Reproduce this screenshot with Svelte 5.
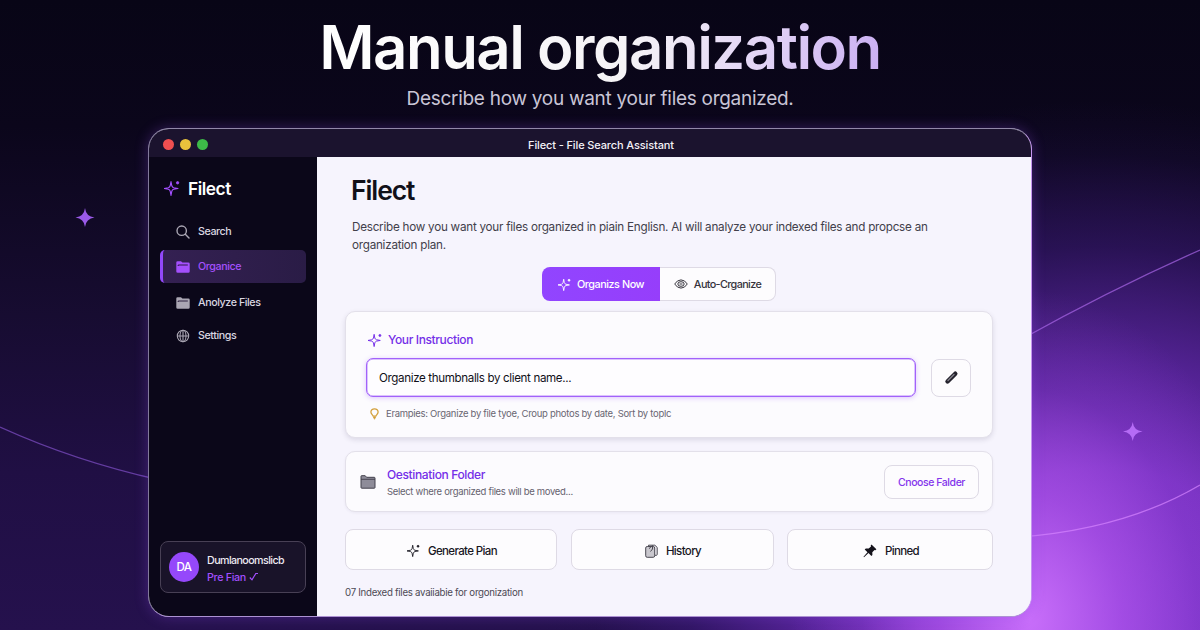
<script>
	const nav = [
		{ label: 'Search', icon: 'search' },
		{ label: 'Organice', icon: 'folder', active: true },
		{ label: 'Anolyze Files', icon: 'folder' },
		{ label: 'Settings', icon: 'globe' }
	];
</script>

{#snippet sparkle(size)}
	<svg width={size} height={size} viewBox="0 0 16 16" fill="none" stroke="currentColor" stroke-width="1.4" stroke-linejoin="round">
		<path d="M7 1.5 7.800 5.800Q8.300 7.200 9.700 7.700L14 8.500 9.700 9.300Q8.300 9.800 7.800 11.200L7 15.500 6.200 11.200Q5.700 9.800 4.300 9.300L0 8.500 4.300 7.700Q5.700 7.200 6.200 5.800Z" stroke-width="1.1" />
		<circle cx="13.6" cy="2.8" r="1.2" fill="currentColor" stroke-width=".8" />
	</svg>
{/snippet}

<div class="page">
	<svg class="backdrop" width="1200" height="630" viewBox="0 0 1200 630" fill="none">
		<path d="M0 427Q75 461 160 480" stroke="#7b4cc0" stroke-opacity=".75" stroke-width="1.3" />
		<path d="M1020 340Q1110 290 1200 250" stroke="#a966e8" stroke-opacity=".7" stroke-width="1.3" />
		<path d="M1020 537Q1125 529 1200 485" stroke="#d585ff" stroke-opacity=".7" stroke-width="1.3" />
		<path d="M85 208Q86 216.500 94.500 217.500 86 218.500 85 227 84 218.500 75.500 217.500 84 216.500 85 208Z" fill="#9a5ae8" />
		<path d="M1132.700 422Q1133.700 430.500 1142.500 431.500 1133.700 432.500 1132.700 441 1131.700 432.500 1123 431.500 1131.700 430.500 1132.700 422Z" fill="#b56bf5" />
	</svg>

	<header>
		<h1>Manual organization</h1>
		<p>Describe how you want your files organized.</p>
	</header>

	<div class="window">
		<div class="titlebar">
			<div class="lights"><i class="red"></i><i class="yellow"></i><i class="green"></i></div>
			<span>Filect - File Search Assistant</span>
		</div>

		<div class="body">
			<aside>
				<div class="brand">{@render sparkle(16)}<b>Filect</b></div>
				<nav>
					{#each nav as item}
						<a class:active={item.active}>
							{#if item.icon === 'search'}
								<svg width="14" height="14" viewBox="0 0 14 14" fill="none" stroke="currentColor" stroke-width="1.4" stroke-linecap="round"><circle cx="5.7" cy="5.7" r="4.7" /><path d="m9.300 9.300 3.700 3.700" /></svg>
							{:else if item.icon === 'folder'}
								<svg width="14" height="14" viewBox="0 0 14 14"><path d="M.3 2.600Q.3 1.200 1.600 1.200H5L6.400 2.500H12.400Q13.700 2.500 13.700 3.800V11.400Q13.700 12.800 12.300 12.800H1.700Q.3 12.800.3 11.400Z" fill="currentColor" /><path d="M2.200 6V5H11.800" fill="none" stroke="#201334" stroke-width=".9" /></svg>
							{:else}
								<svg width="14" height="14" viewBox="0 0 14 14" fill="none" stroke="currentColor" stroke-width="1.1"><circle cx="7" cy="7" r="5.7" /><ellipse cx="7" cy="7" rx="3" ry="5.7" /><path d="M7 1.300v11.400M1.300 7h11.400" /></svg>
							{/if}
							<span>{item.label}</span>
						</a>
					{/each}
				</nav>
				<div class="user">
					<div class="avatar">DA</div>
					<div class="who">
						<strong>Dumlanoomslicb</strong>
						<span>Pre Fian <svg width="10" height="9" viewBox="0 0 10 9" fill="none" stroke="currentColor" stroke-width="1.2"><path d="m.8 5.500 2.200 2.300L6.800 1.500H9" /></svg></span>
					</div>
				</div>
			</aside>

			<main>
				<h2>Filect</h2>
				<p class="lead">Describe how you want your files organized in piain Englisn. AI will analyze your indexed files and propcse an<br />organization plan.</p>

				<div class="tabs">
					<button class="primary">{@render sparkle(13)}Organizs Now</button>
					<button>
						<svg width="14" height="10" viewBox="0 0 14 10" fill="none" stroke="currentColor" stroke-width="1"><path d="M.7 5Q3.200.9 7 .9T13.300 5Q10.800 9.100 7 9.100T.7 5Z" /><ellipse cx="7" cy="5" rx="3.2" ry="2.3" /><path d="M5.500 5h3" /></svg>
						Auto-Crganize
					</button>
				</div>

				<section class="card instruction">
					<h3>{@render sparkle(14)}Your Instruction</h3>
					<div class="entry">
						<div class="input">Organize thumbnalls by client name...</div>
						<button class="edit">
							<svg width="15" height="15" viewBox="0 0 15 15"><path d="M3.500 11.500 11.300 3.700" stroke="#24222c" stroke-width="4.4" stroke-linecap="round" /><path d="m4 10.500 6-6" stroke="#85828d" stroke-width="1.3" stroke-linecap="round" /></svg>
						</button>
					</div>
					<div class="hint">
						<svg width="9" height="12" viewBox="0 0 9 12" fill="none" stroke="#d3a03c" stroke-width="1.3"><path d="M4.500.8C2.300.8.9 2.200.9 4.100.9 5.800 2.500 6.700 3.200 8.200H5.800C6.500 6.700 8.100 5.800 8.100 4.100 8.100 2.200 6.700.8 4.500.8Z" /><path d="M3.300 9h2.400L4.500 11.300Z" fill="#d3a03c" stroke-width=".7" /></svg>
						Erampies: Organize by file tyoe, Croup photos by date, Sort by toplc
					</div>
				</section>

				<section class="card destination">
					<svg width="16" height="14" viewBox="0 0 16 14"><path d="M1 12.500V1.200Q1 .7 1.500.7H5.200L6.600 2.300H14.200Q15 2.300 15 3.100V12.500Q15 13.200 14.300 13.200H1.700Q1 13.200 1 12.500Z" fill="#8e8c99" stroke="#42404c" /><path d="M1 4.300H15" stroke="#42404c" stroke-width=".9" /></svg>
					<div class="about">
						<h3>Oestination Folder</h3>
						<p>Select where organized files will be moved...</p>
					</div>
					<button>Cnoose Falder</button>
				</section>

				<div class="actions">
					<button>{@render sparkle(13)}Generate Pian</button>
					<button>
						<svg width="13" height="14" viewBox="0 0 13 14" fill="#c9c7ce" stroke="#4b4953" stroke-width="1"><path d="M3.500 2.500V1.200H9.800L12.200 3.400V10.500Q12.200 11.300 11.400 11.300H9.700" fill="#eeecf2" /><rect x=".7" y="2.5" width="9" height="10.8" rx="1.5" /><path d="M4 4.600 7.500 1.500V5L5.500 7.500" fill="none" /></svg>
						History
					</button>
					<button>
						<svg width="14" height="14" viewBox="0 0 14 14"><path d="M8.500.6 13.400 5.200 12.400 6.200 11.500 6 9.300 8.300 9.400 11 8.400 12 5.500 9.100 1 13.200.5 12.800 4.500 8.200 1.700 5.500 2.800 4.500 5.700 4.600 8 2.400 7.700 1.400Z" fill="#15131c" /></svg>
						Pinned
					</button>
				</div>

				<p class="status">07 Indexed files avaiiabie for orgonization</p>
			</main>
		</div>
	</div>
</div>

<style>
	:global(body) {
		background: #0a0618;
	}

	.page {
		position: relative;
		box-sizing: border-box;
		width: 1200px;
		height: 630px;
		overflow: hidden;
		font-family: Inter, sans-serif;
		background:
			radial-gradient(ellipse 240px 330px at 1030px 620px, rgba(208, 116, 255, 0.9), rgba(190, 92, 246, 0.55) 38%, rgba(165, 72, 232, 0.2) 70%, rgba(150, 60, 225, 0) 100%),
			radial-gradient(ellipse 560px 540px at 1100px 640px, rgba(136, 60, 216, 0.95), rgba(128, 54, 206, 0.9) 32%, rgba(98, 40, 172, 0.78) 52%, rgba(62, 26, 126, 0.5) 73%, rgba(38, 18, 84, 0.18) 90%, rgba(30, 14, 70, 0) 100%),
			linear-gradient(180deg, #080516 0%, #0b061b 20%, #170c31 50%, #200f44 75%, #25114d 100%);
	}

	.backdrop {
		position: absolute;
		inset: 0;
	}

	header {
		position: relative;
		box-sizing: border-box;
		height: 128px;
		padding-top: 14px;
		text-align: center;
		white-space: nowrap;
	}

	h1,
	h2,
	h3,
	p {
		margin: 0;
	}

	h1 {
		width: 564px;
		margin: 0 auto;
		padding-bottom: 5px;
		font-size: 60px;
		font-weight: 600;
		line-height: 67px;
		letter-spacing: -1.52px;
		color: transparent;
		background: linear-gradient(100deg, #fff 0%, #f5f3f6 55%, #e4d7f6 76%, #c9aef2 100%);
		background-clip: text;
	}

	header p {
		font-size: 19px;
		line-height: 26px;
		letter-spacing: -0.28px;
		color: #c9c5d6;
	}

	.window {
		position: relative;
		box-sizing: border-box;
		width: 884px;
		height: 489px;
		margin-left: 148px;
		border: 1.5px solid;
		border-color: #9188a8 #c596ef #ad92d3 #827a9b;
		border-radius: 21px;
		overflow: hidden;
		background: #f6f4fd;
		box-shadow: 0 0 14px rgba(150, 80, 240, 0.3);
	}

	.titlebar {
		position: relative;
		display: flex;
		align-items: center;
		justify-content: center;
		box-sizing: border-box;
		height: 28px;
		padding: 4px 0 0 22px;
		background: #1b132e;
		color: #f3f1f7;
		font-size: 11px;
		font-weight: 500;
		letter-spacing: -0.12px;
	}

	.lights {
		position: absolute;
		left: 14px;
		top: 10px;
		display: flex;
		gap: 6px;
	}

	.lights i {
		width: 11px;
		height: 11px;
		border-radius: 50%;
	}

	.red {
		background: #f04f50;
	}

	.yellow {
		background: #e8c23c;
	}

	.green {
		background: #3dba48;
	}

	.body {
		display: flex;
		height: 459px;
	}

	aside {
		display: flex;
		flex-direction: column;
		box-sizing: border-box;
		width: 168px;
		padding: 19px 11px 23px;
		background: #0b0719;
		color: #dad7e1;
	}

	.brand {
		display: flex;
		align-items: center;
		gap: 8px;
		height: 24px;
		padding-left: 4px;
		color: #a34fff;
	}

	.brand b {
		font-size: 17.3px;
		font-weight: 600;
		letter-spacing: -0.45px;
		color: #fff;
	}

	nav {
		display: flex;
		flex-direction: column;
		margin-top: 15px;
	}

	nav a {
		display: flex;
		align-items: center;
		gap: 8px;
		box-sizing: border-box;
		height: 33px;
		padding-left: 16px;
		font-size: 10.7px;
		font-weight: 500;
		letter-spacing: -0.42px;
	}

	nav a svg {
		color: #aaa6b3;
	}

	nav .active,
	nav .active svg {
		color: #a450fc;
	}

	nav .active {
		margin: 2px 0 3px;
		padding-left: 13px;
		border-left: 3px solid #9248fa;
		border-radius: 5px;
		background: linear-gradient(90deg, #342052, #2a1c46);
	}

	.user {
		display: flex;
		align-items: center;
		gap: 8px;
		box-sizing: border-box;
		height: 52px;
		margin-top: auto;
		padding-left: 8px;
		border: 1px solid #484055;
		border-radius: 8px;
		background: #191329;
	}

	.avatar {
		width: 30px;
		height: 30px;
		border-radius: 50%;
		background: #9548fb;
		color: #fff;
		font-size: 11.5px;
		font-weight: 500;
		line-height: 30px;
		letter-spacing: -0.4px;
		text-align: center;
	}

	.who {
		padding-top: 3px;
		font-size: 10.7px;
		font-weight: 500;
		line-height: 17px;
		white-space: nowrap;
	}

	.who strong {
		display: block;
		font-weight: 500;
		letter-spacing: -0.58px;
		color: #eeeaf3;
	}

	.who span {
		color: #a34fff;
		letter-spacing: -0.3px;
	}

	main {
		flex: 1;
		padding: 18px 38px 0 28px;
		background: #f6f4fd;
		color: #111019;
	}

	h2 {
		margin-left: 6px;
		font-size: 26.5px;
		font-weight: 600;
		line-height: 31px;
		letter-spacing: -1.1px;
	}

	.lead {
		margin: 12px 0 0 7px;
		font-size: 11.7px;
		line-height: 18px;
		letter-spacing: -0.25px;
		color: #42404b;
		white-space: nowrap;
	}

	button {
		display: flex;
		align-items: center;
		justify-content: center;
		box-sizing: border-box;
		padding: 0;
		border: 1px solid #dedae5;
		border-radius: 8px;
		background: #fdfcfe;
		font-family: inherit;
		color: #18161f;
		white-space: nowrap;
	}

	.tabs {
		display: flex;
		justify-content: center;
		margin-top: 13px;
		padding-right: 20px;
	}

	.tabs button {
		width: 116px;
		height: 34px;
		gap: 6px;
		border-left: 0;
		border-radius: 0 8px 8px 0;
		font-size: 10.8px;
		font-weight: 500;
		letter-spacing: -0.62px;
		color: #35333c;
	}

	.tabs .primary {
		width: 118px;
		border: 0;
		border-radius: 8px 0 0 8px;
		background: linear-gradient(90deg, #9145ff, #963efb);
		color: #fff;
		letter-spacing: -0.45px;
	}

	.card {
		box-sizing: border-box;
		border: 1px solid #e3e0ea;
		border-radius: 10px;
		background: #fcfbfe;
	}

	.instruction {
		height: 127px;
		margin-top: 10px;
		padding: 19px 21px 0 20px;
		box-shadow: 0 2px 5px rgba(50, 40, 80, 0.13);
	}

	h3 {
		display: flex;
		align-items: center;
		gap: 6px;
		font-size: 12px;
		font-weight: 500;
		line-height: 18px;
		letter-spacing: -0.37px;
		color: #742ee8;
	}

	.instruction h3 {
		padding-left: 2px;
	}

	.entry {
		display: flex;
		align-items: center;
		gap: 15px;
		margin-top: 9px;
	}

	.input {
		flex: 1;
		box-sizing: border-box;
		height: 39px;
		padding-left: 12px;
		border: 1.5px solid #a262fa;
		border-radius: 7px;
		background: #fefdff;
		box-shadow: 0 1px 5px rgba(150, 80, 250, 0.3), inset 0 0 0 0.5px #b88afc;
		font-size: 11.6px;
		line-height: 38px;
		letter-spacing: -0.36px;
	}

	.edit {
		width: 40px;
		height: 38px;
	}

	.hint {
		display: flex;
		align-items: center;
		gap: 7px;
		margin: 9px 0 0 4px;
		font-size: 9.5px;
		line-height: 15px;
		letter-spacing: -0.29px;
		color: #696672;
		white-space: nowrap;
	}

	.destination {
		display: flex;
		align-items: center;
		gap: 11px;
		height: 61px;
		margin-top: 13px;
		padding: 1px 13px 0 14px;
		box-shadow: 0 1px 3px rgba(50, 40, 80, 0.06);
	}

	.about {
		flex: 1;
	}

	.about p {
		font-size: 9.5px;
		line-height: 15px;
		letter-spacing: -0.31px;
		color: #65626e;
	}

	.destination button {
		width: 95px;
		height: 34px;
		padding-top: 1px;
		font-size: 10.5px;
		font-weight: 500;
		letter-spacing: -0.43px;
		color: #8434ec;
	}

	.actions {
		display: grid;
		grid-template-columns: 212px 203px 206px;
		justify-content: space-between;
		margin-top: 17px;
	}

	.actions button {
		height: 41px;
		gap: 8px;
		padding: 2px 0 0 2px;
		font-size: 11.5px;
		font-weight: 500;
		letter-spacing: -0.63px;
	}

	.status {
		margin-top: 15px;
		font-size: 9.7px;
		line-height: 15px;
		letter-spacing: -0.29px;
		color: #4d4a55;
	}
</style>
